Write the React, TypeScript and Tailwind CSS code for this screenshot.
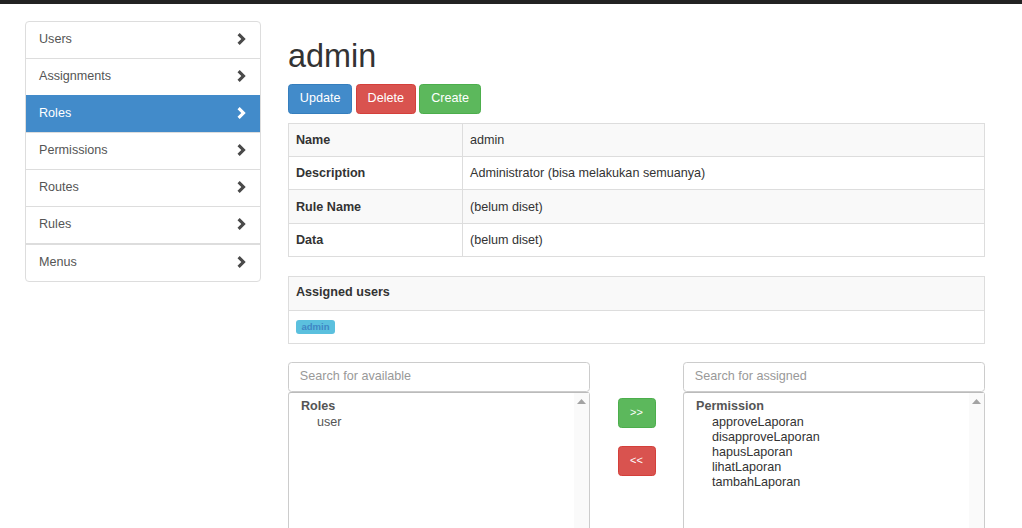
import React from "react";

const Chevron = ({ active }: { active?: boolean }) => (
  <svg width="9" height="12" viewBox="0 0 9 12" className="shrink-0">
    <polygon
      points="0.5,2.2 2.7,0 8.7,6 2.7,12 0.5,9.8 4.3,6"
      fill={active ? "#ffffff" : "#4a4a4a"}
    />
  </svg>
);

const navItems = ["Users", "Assignments", "Roles", "Permissions", "Routes", "Rules"];

export default function App() {
  return (
    <div
      className="w-[1022px] h-[528px] overflow-hidden bg-white text-[#333]"
      style={{ fontFamily: '"Liberation Sans", Arial, Helvetica, sans-serif' }}
    >
      <div className="h-[4px] bg-[#222]" />
      <div className="flex pl-[25px] gap-[27px]">
        {/* Sidebar */}
        <div className="w-[236px] mt-[17px] self-start">
          <div className="border border-[#ddd] rounded-[4px] overflow-hidden">
            {navItems.map((n, i) => {
              const active = n === "Roles";
              return (
                <div
                  key={n}
                  className={`${i > 0 ? "h-[37px] border-t" : "h-[36px]"} flex items-center justify-between pl-[13px] pr-[14px] pb-[2px] text-[12.6px] ${
                    active ? "bg-[#428bca] text-white border-[#428bca]" : "text-[#555] border-[#ddd]"
                  }`}
                >
                  <span>{n}</span>
                  <Chevron active={active} />
                </div>
              );
            })}
            <div className="h-[38px] flex items-center justify-between pl-[13px] pr-[14px] pb-[2px] text-[12.6px] text-[#555] border-t-[2px] border-[#ddd]">
              <span>Menus</span>
              <Chevron />
            </div>
          </div>
        </div>

        {/* Main */}
        <div className="w-[697px]">
          <h1 className="mt-[35px] text-[32.4px] leading-[35.6px] font-normal text-[#333]">admin</h1>
          <div className="flex gap-[3.6px] mt-[9px]">
            <button className="h-[30px] px-[10.8px] text-[12.6px] text-white bg-[#428bca] border border-[#357ebd] rounded-[3.6px]">
              Update
            </button>
            <button className="h-[30px] px-[10.8px] text-[12.6px] text-white bg-[#d9534f] border border-[#d43f3a] rounded-[3.6px]">
              Delete
            </button>
            <button className="h-[30px] px-[10.8px] text-[12.6px] text-white bg-[#5cb85c] border border-[#4cae4c] rounded-[3.6px]">
              Create
            </button>
          </div>

          <table className="w-full mt-[9px] border-collapse border border-[#ddd] text-[12.6px]">
            <tbody>
              {[
                ["Name", "admin"],
                ["Description", "Administrator (bisa melakukan semuanya)"],
                ["Rule Name", "(belum diset)"],
                ["Data", "(belum diset)"],
              ].map(([k, v], i) => (
                <tr key={k} className={i % 2 === 0 ? "bg-[#f9f9f9]" : "bg-white"}>
                  <th className="w-[174px] text-left font-bold border border-[#ddd] px-[7px] py-[7.2px] leading-[18px]">
                    {k}
                  </th>
                  <td className="border border-[#ddd] px-[7px] py-[7.2px] leading-[18px]">{v}</td>
                </tr>
              ))}
            </tbody>
          </table>

          <table className="w-full mt-[18.5px] border-collapse border border-[#ddd] text-[12.6px]">
            <tbody>
              <tr className="bg-[#f9f9f9]">
                <th className="h-[34px] text-left font-bold border border-[#ddd] px-[7px] pt-0 pb-[2px] leading-[18px]">
                  Assigned users
                </th>
              </tr>
              <tr>
                <td className="h-[33px] border border-[#ddd] px-[7px] py-0 leading-[18px]">
                  <span className="inline-flex items-center h-[14px] px-[5.5px] rounded-[3px] bg-[#5bc0de] text-[#3f86c4] text-[9.5px] font-bold align-middle">
                    admin
                  </span>
                </td>
              </tr>
            </tbody>
          </table>

          <div className="flex mt-[18px]">
            <div className="w-[302px]">
              <div className="h-[30px] border border-[#ccc] rounded-[3.6px] flex items-center px-[10.8px] text-[12.6px] text-[#999]">
                Search for available
              </div>
              <div className="h-[200px] border border-[#ccc] border-t-[#bbb] rounded-t-[3px] flex">
                <div className="flex-1 pt-[5px] pl-[12px] text-[12.6px] text-[#555]">
                  <div className="font-bold leading-[16px]">Roles</div>
                  <div className="pl-[16px] mt-[1px] leading-[15px]">user</div>
                </div>
                <div className="w-[15px] bg-[#fafafa] flex justify-center pt-[6px]">
                  <svg width="9" height="5" viewBox="0 0 9 5">
                    <polygon points="0,5 4.5,0 9,5" fill="#a3a3a3" />
                  </svg>
                </div>
              </div>
            </div>
            <div className="w-[93px] flex flex-col items-center pt-[36px] gap-[18px]">
              <button className="w-[38px] h-[30px] rounded-[3.6px] bg-[#5cb85c] border border-[#4cae4c] text-white text-[11px]">
                &gt;&gt;
              </button>
              <button className="w-[38px] h-[30px] rounded-[3.6px] bg-[#d9534f] border border-[#d43f3a] text-white text-[11px]">
                &lt;&lt;
              </button>
            </div>
            <div className="w-[302px]">
              <div className="h-[30px] border border-[#ccc] rounded-[3.6px] flex items-center px-[10.8px] text-[12.6px] text-[#999]">
                Search for assigned
              </div>
              <div className="h-[200px] border border-[#ccc] border-t-[#bbb] rounded-t-[3px] flex">
                <div className="flex-1 pt-[5px] pl-[12px] text-[12.6px] text-[#555]">
                  <div className="font-bold leading-[16px]">Permission</div>
                  <div className="pl-[16px] mt-[1px] leading-[15px] text-[#333]">
                    <div>approveLaporan</div>
                    <div>disapproveLaporan</div>
                    <div>hapusLaporan</div>
                    <div>lihatLaporan</div>
                    <div>tambahLaporan</div>
                  </div>
                </div>
                <div className="w-[15px] bg-[#fafafa] flex justify-center pt-[6px]">
                  <svg width="9" height="5" viewBox="0 0 9 5">
                    <polygon points="0,5 4.5,0 9,5" fill="#a3a3a3" />
                  </svg>
                </div>
              </div>
            </div>
          </div>
        </div>
      </div>
    </div>
  );
}
